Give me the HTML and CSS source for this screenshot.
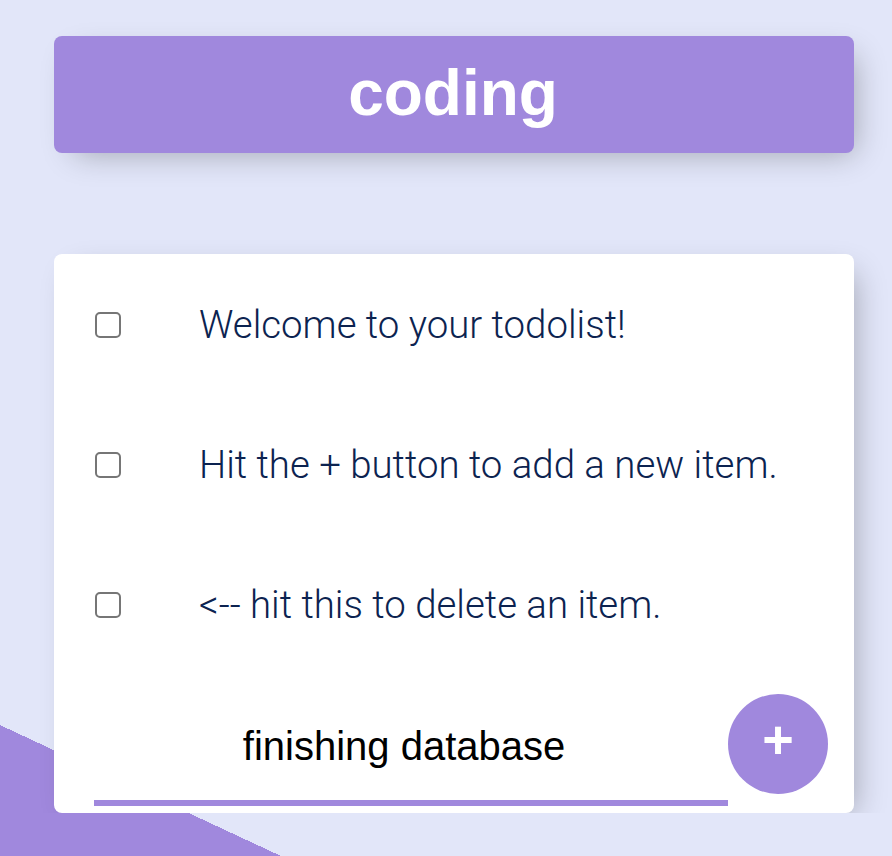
FILE: index.html
```html
<!DOCTYPE html>
<html lang="en">
<head>
<meta charset="utf-8">
<title>coding</title>
<link rel="stylesheet" href="styles.css">
</head>
<body>
<div class="page">
  <div class="box heading"><h1>coding</h1></div>
  <div class="box list">
    <div class="item"><input type="checkbox" class="check"><p>Welcome to your todolist!</p></div>
    <div class="item"><input type="checkbox" class="check"><p>Hit the + button to add a new item.</p></div>
    <div class="item"><input type="checkbox" class="check"><p>&lt;-- hit this to delete an item.</p></div>
    <form class="add-form">
      <input type="text" class="new-item" value="finishing database">
      <button type="button" class="add-btn">+</button>
    </form>
  </div>
</div>
</body>
</html>
```

FILE: styles.css
```css
html {
  background-color: #E2E6F9;
  background-image: linear-gradient(25deg, #A088DD 50%, #E2E6F9 50%);
  background-size: 100% 1866px;
  background-repeat: no-repeat;
  min-height: 100%;
}
body {
  margin: 0;
  font-family: "Liberation Sans", Arial, sans-serif;
}
.page {
  padding: 36px 0 0 54px;
  width: 800px;
}
.box {
  width: 800px;
  background: #fff;
  border-radius: 8px;
  box-shadow: 10px 10px 30px -10px rgba(0, 0, 0, 0.3);
}
.heading {
  background: #A088DD;
  height: 117px;
  display: flex;
  align-items: center;
  justify-content: center;
}
.heading h1 {
  margin: 0 0 0 -2px;
  color: #fff;
  font-size: 64px;
  font-weight: 700;
  letter-spacing: 0;
  line-height: 1;
  padding-bottom: 4px;
}
.list {
  margin-top: 101px;
  padding-bottom: 7px;
}
.item {
  height: 140px;
  display: flex;
  align-items: center;
}
.check {
  appearance: none;
  -webkit-appearance: none;
  width: 26px;
  height: 26px;
  margin: 2px 38px 0 41px;
  border: 2px solid #767676;
  border-radius: 5px;
  background: #fff;
  flex: none;
}
.item p {
  margin: 0;
  padding: 0 40px;
  font-family: Roboto, "Liberation Sans", sans-serif;
  font-weight: 300;
  font-size: 38.4px;
  color: #0C2350;
}
.add-form {
  display: flex;
  align-items: flex-start;
  margin-left: 40px;
  padding-top: 12px;
}
.new-item {
  box-sizing: border-box;
  width: 634px;
  height: 120px;
  border: none;
  outline: none;
  background: transparent;
  text-align: center;
  font-family: "Liberation Sans", Arial, sans-serif;
  font-size: 40px;
  color: #000;
  padding: 0 14px 0 0;
  box-shadow: inset 0 -6px 0 0 #A088DD;
}
.add-btn {
  width: 100px;
  height: 100px;
  margin-top: 8px;
  border: 0;
  border-radius: 50%;
  background: #A088DD;
  color: #fff;
  font-family: "Liberation Sans", Arial, sans-serif;
  font-size: 54px;
  font-weight: 700;
  line-height: 1;
  padding: 0 0 10px 0;
  flex: none;
}
```
